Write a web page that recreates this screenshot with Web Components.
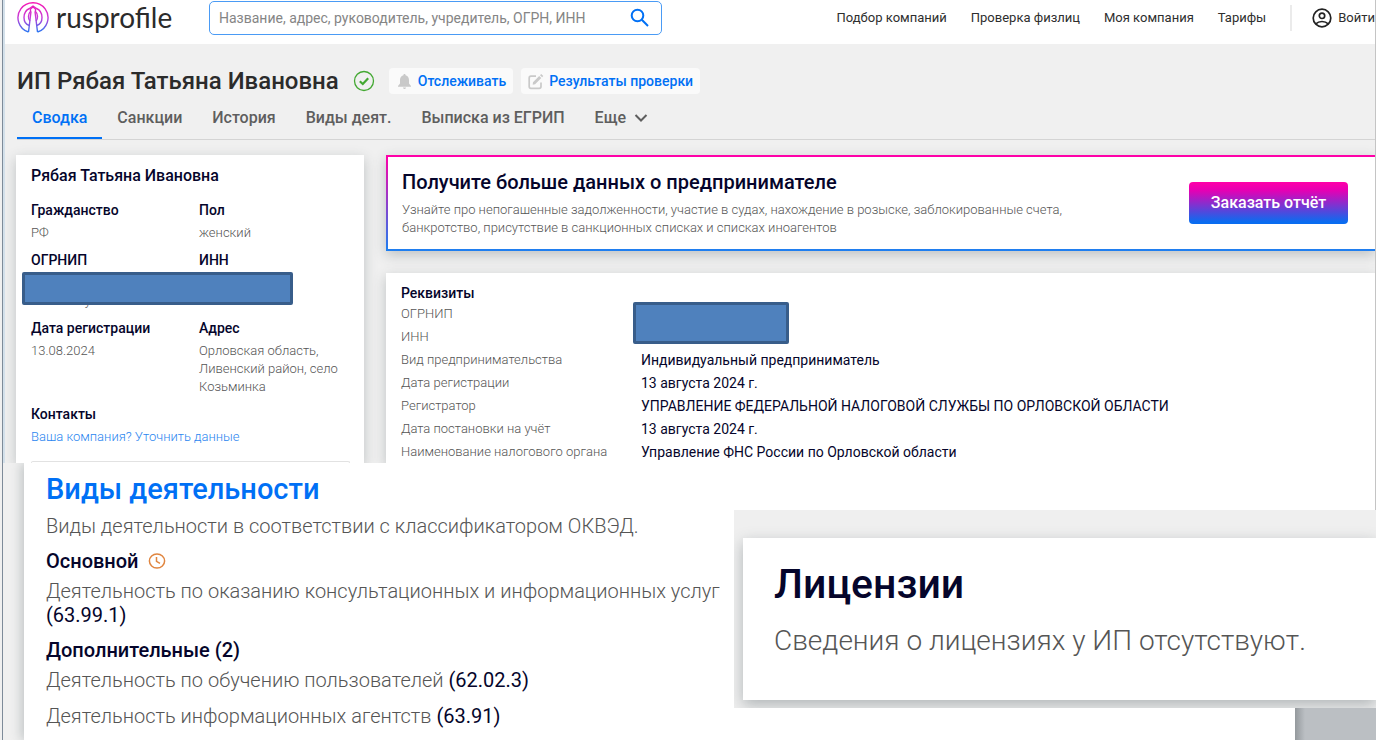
<!DOCTYPE html>
<html lang="ru">
<head>
<meta charset="utf-8">
<title>ИП Рябая Татьяна Ивановна</title>
<style>
  * { box-sizing: border-box; }
  body {
    margin: 0;
    background: #f0f0f0;
    font-family: Roboto, "Noto Sans", sans-serif;
    color: #000;
    overflow: hidden;
    --blue: #0070f5;
    --navy: #05052b;
    --grey: #555;
    --shadow: 0 4px 12px rgba(60, 75, 80, .28);
  }
</style>
</head>
<body>
<profile-page></profile-page>

<script>
function define(name, html, setup) {
  const template = document.createElement('template');
  template.innerHTML = html;

  window.customElements.define(name, class extends HTMLElement {
    constructor() {
      super();
      this.attachShadow({ mode: 'open' });
      this.shadowRoot.appendChild(template.content.cloneNode(true));
    }

    connectedCallback() {
      if (setup) setup(this, this.shadowRoot);
    }
  });
}

define('site-logo', `
  <style>
  :host { display: block; }
  a {
    display: flex;
    align-items: center;
    gap: 7px;
    color: #2b2b2b;
    font: 400 28px/32px Lato, sans-serif;
    text-decoration: none;
  }
  svg { display: block; }
  </style>
  <a href="#">
    <svg width="32" height="32" viewBox="0 0 32 32" fill="none" stroke="url(#g)" stroke-width="1.4">
      <defs>
        <linearGradient id="g" gradientUnits="userSpaceOnUse" x1="0" y1="1" x2="0" y2="32">
          <stop offset="0" stop-color="#f814b0"/>
          <stop offset=".5" stop-color="#c63bd8"/>
          <stop offset="1" stop-color="#1f7bf4"/>
        </linearGradient>
      </defs>
      <path d="M11.500 31A15 15 0 1 1 20.500 31"/>
      <path d="M11.500 31L14 10.500M20.500 31L18 10.500"/>
      <path d="M12.300 24.500C9 23.500 7 20.500 7 16.500C7 12 9 9 12.500 7.500L16 5L19.500 7.500C23 9 25 12 25 16.500C25 20.500 23 23.500 19.700 24.500"/>
      <path d="M12.900 20C11 17.500 10.800 13 13.500 10.500V8L16 6L18.500 8V10.500C21.200 13 21 17.500 19.100 20"/>
    </svg>
    <span>rusprofile</span>
  </a>
`);

define('search-box', `
  <style>
  :host { display: block; }
  form {
    display: flex;
    align-items: center;
    height: 34px;
    padding: 0 10px 0 9px;
    border: 1px solid #4a9bf5;
    border-radius: 5px;
    background: #fff;
    box-sizing: border-box;
  }
  input {
    flex: 1;
    min-width: 0;
    border: 0;
    padding: 0;
    outline: 0;
    background: none;
    color: #333;
    font: 400 14px/20px Roboto, sans-serif;
  }
  input::placeholder { color: #858585; opacity: 1; }
  button { border: 0; padding: 0; background: none; }
  svg { display: block; }
  </style>
  <form>
    <input type="text" aria-label="Поиск" placeholder="Название, адрес, руководитель, учредитель, ОГРН, ИНН">
    <button type="button" aria-label="Найти">
      <svg width="22" height="22" viewBox="0 0 22 22" fill="none" stroke="#0070f5" stroke-width="2">
        <circle cx="8.500" cy="8.500" r="5.800"/>
        <path d="M12.800 12.800L19 19"/>
      </svg>
    </button>
  </form>
`);

define('site-header', `
  <style>
  :host {
    display: flex;
    align-items: flex-start;
    height: 44px;
    padding: 1px 0 0 12px;
    background: #fff;
    box-sizing: border-box;
  }
  site-logo { width: 192px; }
  search-box { flex: 0 1 453px; }
  nav {
    display: flex;
    align-items: center;
    gap: 24px;
    height: 34px;
    margin-left: auto;
    white-space: nowrap;
  }
  a {
    color: #2e2e2e;
    font-size: 13px;
    line-height: 20px;
    text-decoration: none;
  }
  .login {
    display: flex;
    align-items: center;
    gap: 6px;
    padding-left: 20px;
    border-left: 2px solid #ebebeb;
    line-height: 26px;
  }
  </style>
  <site-logo></site-logo>
  <search-box></search-box>
  <nav>
    <a href="#">Подбор компаний</a>
    <a href="#">Проверка физлиц</a>
    <a href="#">Моя компания</a>
    <a href="#">Тарифы</a>
    <a href="#" class="login">
      <svg width="20" height="20" viewBox="0 0 20 20" fill="none" stroke="#222" stroke-width="1.700">
        <circle cx="10" cy="10" r="8.800"/>
        <circle cx="10" cy="7.800" r="2.700"/>
        <path d="M3.800 15.800C7 12.700 13 12.700 16.200 15.800"/>
      </svg>
      Войти
    </a>
  </nav>
`);

define('title-bar', `
  <style>
  :host {
    display: flex;
    align-items: center;
    padding: 21px 0 0 12px;
  }
  h1 {
    margin: 0 14px 0 0;
    color: #2b2b2b;
    font-size: 24px;
    line-height: 32px;
    font-weight: 500;
    white-space: nowrap;
  }
  svg { display: block; flex: none; }
  button {
    display: flex;
    align-items: center;
    gap: 5px;
    height: 26px;
    margin-left: 8px;
    padding: 0 7px;
    border: 0;
    border-radius: 4px;
    background: #fafafa;
    color: var(--blue);
    font: 500 14px/20px Roboto, sans-serif;
    white-space: nowrap;
  }
  .ok { margin-right: 6px; }
  </style>
  <h1>ИП Рябая Татьяна Ивановна</h1>
  <svg class="ok" width="22" height="22" viewBox="0 0 22 22" fill="none" stroke="#43a832">
    <circle cx="11" cy="11" r="9.500" stroke-width="1.300"/>
    <path d="M6.800 11.200L9.800 14L15.200 8.300" stroke-width="2.200"/>
  </svg>
  <button type="button">
    <svg width="17" height="17" viewBox="0 0 17 17" fill="#c9c9c9">
      <path d="M8.500 1C9.100 1 9.600 1.500 9.600 2.200C11.900 2.800 13 4.700 13 7V10.500L15 13V13.800H2V13L4 10.500V7C4 4.700 5.100 2.800 7.400 2.200C7.400 1.500 7.900 1 8.500 1Z"/>
      <path d="M7 14.500H10C10 15.400 9.300 16 8.500 16S7 15.400 7 14.500Z"/>
    </svg>
    Отслеживать
  </button>
  <button type="button">
    <svg width="16" height="17" viewBox="0 0 16 17" fill="none" stroke="#c9c9c9">
      <path d="M8 3.200H3C1.900 3.200 1.200 3.900 1.200 5V13.500C1.200 14.600 1.900 15.300 3 15.300H11.200C12.300 15.300 13 14.600 13 13.500V9.500" stroke-width="1.700"/>
      <path d="M5 9.200L11.200 3L13.300 5.100L7.100 11.300L4.700 11.700ZM12 2.200L13.200 1L15.300 3.100L14.100 4.300Z" fill="#c9c9c9" stroke="none"/>
    </svg>
    Результаты проверки
  </button>
`);

define('tab-bar', `
  <style>
  :host { display: block; padding: 0 0 0 12px; }
  nav {
    display: flex;
    height: 43px;
    border-bottom: 1px solid #d4d4d4;
    box-sizing: border-box;
  }
  a {
    display: flex;
    align-items: center;
    height: 42px;
    padding: 2px 15px 0;
    box-sizing: border-box;
    border-bottom: 2px solid transparent;
    color: #5e5e5e;
    font-size: 16px;
    line-height: 20px;
    font-weight: 500;
    text-decoration: none;
    white-space: nowrap;
  }
  a.active { border-color: var(--blue); color: var(--blue); }
  svg { margin-left: 8px; }
  </style>
  <nav>
    <a href="#" class="active">Сводка</a>
    <a href="#">Санкции</a>
    <a href="#">История</a>
    <a href="#">Виды деят.</a>
    <a href="#">Выписка из ЕГРИП</a>
    <a href="#">Еще
      <svg width="14" height="10" viewBox="0 0 14 10" fill="none" stroke="#5e5e5e" stroke-width="2">
        <path d="M1.500 2L7 7.500L12.500 2"/>
      </svg>
    </a>
  </nav>
`);

// Opaque plate that hides a private number
define('hidden-plate', `
  <style>
  :host {
    display: block;
    box-sizing: border-box;
    border: 3px solid #385d8a;
    border-radius: 2px;
    background: #4f81bd;
  }
  </style>
`);

define('info-field', `
  <style>
  :host { display: block; line-height: 18px; }
  b { display: block; margin-bottom: 5px; color: var(--navy); font-size: 14px; font-weight: 500; }
  div { color: var(--grey); font-size: 13px; font-weight: 300; }
  </style>
  <b></b>
  <div><slot></slot></div>
`, (el, root) => {
  root.querySelector('b').textContent = el.getAttribute('label');
});

define('person-card', `
  <style>
  :host {
    display: block;
    padding: 10px 14px 0 15px;
    background: #fff;
    box-shadow: var(--shadow);
    box-sizing: border-box;
  }
  h2 {
    margin: 0 0 14px;
    color: var(--navy);
    font-size: 16px;
    line-height: 22px;
    font-weight: 500;
  }
  .fields {
    position: relative;
    display: grid;
    grid-template-columns: 168px 1fr;
    row-gap: 9px;
    margin-bottom: 15px;
  }
  hidden-plate {
    position: absolute;
    left: -9px;
    top: 71px;
    width: 271px;
    height: 33px;
  }
  .wide { grid-column: 1 / 3; }
  a { color: #2b86f0; text-decoration: none; }
  .next {
    height: 2px;
    border: 1px solid #e2e2e2;
    border-bottom: 0;
    border-radius: 3px 3px 0 0;
    box-sizing: border-box;
  }
  </style>
  <h2>Рябая Татьяна Ивановна</h2>
  <div class="fields">
    <info-field label="Гражданство">РФ</info-field>
    <info-field label="Пол">женский</info-field>
    <info-field label="ОГРНИП"><br>от 13 августа 2024 г.</info-field>
    <info-field label="ИНН"></info-field>
    <info-field label="Дата регистрации">13.08.2024</info-field>
    <info-field label="Адрес">Орловская область, Ливенский район, село Козьминка</info-field>
    <info-field label="Контакты" class="wide"><a href="#">Ваша компания? Уточнить данные</a></info-field>
    <hidden-plate></hidden-plate>
  </div>
  <div class="next"></div>
`);

define('promo-banner', `
  <style>
  :host {
    display: flex;
    align-items: center;
    justify-content: space-between;
    height: 96px;
    padding: 0 27px 0 14px;
    border: 2px solid;
    border-image: linear-gradient(#ff00a8, #1e7ff0) 1;
    border-right: 0;
    background: #fff;
    box-shadow: var(--shadow);
    box-sizing: border-box;
  }
  h2 {
    margin: 0 0 7px;
    color: var(--navy);
    font-size: 20px;
    line-height: 24px;
    font-weight: 500;
  }
  p {
    max-width: 700px;
    margin: 0;
    color: var(--grey);
    font-size: 13px;
    line-height: 18px;
    font-weight: 300;
  }
  button {
    flex: none;
    width: 159px;
    height: 42px;
    border: 0;
    border-radius: 4px;
    background: linear-gradient(#ff00a8, #e500b4 20%, #0a6cf0 95%);
    color: #fff;
    font: 500 16px/20px Roboto, sans-serif;
  }
  </style>
  <div>
    <h2>Получите больше данных о предпринимателе</h2>
    <p>Узнайте про непогашенные задолженности, участие в судах, нахождение в розыске, заблокированные счета, банкротство, присутствие в санкционных списках и списках иноагентов</p>
  </div>
  <button type="button">Заказать отчёт</button>
`);

define('details-card', `
  <style>
  :host {
    display: block;
    position: relative;
    flex: 1;
    padding: 11px 15px 0;
    background: #fff;
    box-shadow: var(--shadow);
    box-sizing: border-box;
    color: var(--navy);
    font-size: 14px;
  }
  h3 { margin: 0; font-size: 14px; line-height: 18px; font-weight: 500; }
  table { border-collapse: collapse; }
  th, td { height: 23px; padding: 0; line-height: 22px; text-align: left; font-weight: 400; }
  th { width: 240px; color: var(--grey); font-size: 13px; font-weight: 300; }
  hidden-plate {
    position: absolute;
    left: 247px;
    top: 29px;
    width: 156px;
    height: 42px;
  }
  </style>
  <h3>Реквизиты</h3>
  <table><tbody></tbody></table>
  <hidden-plate></hidden-plate>
`, (el, root) => {
  const rows = [
    ['ОГРНИП', ''],
    ['ИНН', ''],
    ['Вид предпринимательства', 'Индивидуальный предприниматель'],
    ['Дата регистрации', '13 августа 2024 г.'],
    ['Регистратор', 'УПРАВЛЕНИЕ ФЕДЕРАЛЬНОЙ НАЛОГОВОЙ СЛУЖБЫ ПО ОРЛОВСКОЙ ОБЛАСТИ'],
    ['Дата постановки на учёт', '13 августа 2024 г.'],
    ['Наименование налогового органа', 'Управление ФНС России по Орловской области'],
  ];
  const body = root.querySelector('tbody');
  for (const [name, value] of rows) {
    const row = body.insertRow();
    const head = document.createElement('th');
    head.scope = 'row';
    head.textContent = name;
    row.appendChild(head);
    row.insertCell().textContent = value;
  }
});

define('activity-panel', `
  <style>
  :host {
    display: block;
    margin-left: 21px;
    padding: 10px 8px 12px 22px;
    background: #fff;
    box-shadow: -3px 0 10px rgba(60, 75, 80, .25);
    color: var(--grey);
    font-size: 20px;
    line-height: 24px;
    font-weight: 300;
    box-sizing: border-box;
  }
  h2 { margin: 0 0 9px; color: var(--blue); font-size: 29px; line-height: 32px; font-weight: 500; }
  h3 {
    display: flex;
    align-items: center;
    gap: 9px;
    margin: 11px 0 6px;
    color: var(--navy);
    font-size: 20px;
    line-height: 24px;
    font-weight: 500;
  }
  p { margin: 0; }
  p + p { margin-top: 12px; }
  b { color: var(--navy); font-weight: 400; }
  </style>
  <h2>Виды деятельности</h2>
  <p>Виды деятельности в соответствии с классификатором ОКВЭД.</p>
  <h3>Основной
    <svg width="18" height="18" viewBox="0 0 18 18" fill="none" stroke="#e0853f" stroke-width="1.500">
      <ellipse cx="9" cy="9" rx="7.600" ry="7"/>
      <path d="M8.500 5V9.300L12 11.300"/>
    </svg>
  </h3>
  <p>Деятельность по оказанию консультационных и информационных услуг <b>(63.99.1)</b></p>
  <h3>Дополнительные (2)</h3>
  <p>Деятельность по обучению пользователей <b>(62.02.3)</b></p>
  <p>Деятельность информационных агентств <b>(63.91)</b></p>
`);

define('license-panel', `
  <style>
  :host {
    display: block;
    padding: 28px 0 8px 9px;
    background: #efefef;
    overflow: hidden;
  }
  section {
    padding: 21px 31px 39px;
    background: #fff;
    box-shadow: 0 5px 14px rgba(60, 75, 80, .35);
  }
  h2 { margin: 0 0 12px; color: var(--navy); font-size: 41px; line-height: 50px; font-weight: 500; }
  p { margin: 0; color: var(--grey); font-size: 28px; line-height: 40px; font-weight: 300; white-space: nowrap; }
  </style>
  <section>
    <h2>Лицензии</h2>
    <p>Сведения о лицензиях у ИП отсутствуют.</p>
  </section>
`);

define('profile-page', `
  <style>
  :host {
    display: flex;
    flex-direction: column;
    min-height: 100vh;
    margin-left: 2px;
    border-left: 1px solid #7e8b99;
    box-sizing: border-box;
  }
  .top {
    border-left: 2px solid #d3e0ea;
    border-right: 1px solid #c4c4c4;
    overflow: hidden;
  }
  .content {
    display: grid;
    grid-template-columns: 348px 1fr;
    column-gap: 22px;
    padding: 15px 0 0 11px;
  }
  .main { display: flex; flex-direction: column; gap: 22px; }
  .bottom {
    flex: 1;
    display: grid;
    grid-template-columns: 731px 1fr;
    overflow: hidden;
  }
  .side { display: flex; flex-direction: column; z-index: 1; }
  .blank { height: 47px; background: #fff; border-right: 1px solid #c4c4c4; }
  .rest { flex: 1; display: flex; background: #fff; }
  .rest::after {
    content: "";
    width: 81px;
    margin-left: auto;
    background: linear-gradient(90deg, #94999d, #bbbfc3 10px);
  }
  </style>
  <div class="top">
    <site-header></site-header>
    <title-bar></title-bar>
    <tab-bar></tab-bar>
    <div class="content">
      <person-card></person-card>
      <div class="main">
        <promo-banner></promo-banner>
        <details-card></details-card>
      </div>
    </div>
  </div>
  <div class="bottom">
    <activity-panel></activity-panel>
    <div class="side">
      <div class="blank"></div>
      <license-panel></license-panel>
      <div class="rest"></div>
    </div>
  </div>
`);
</script>
</body>
</html>
